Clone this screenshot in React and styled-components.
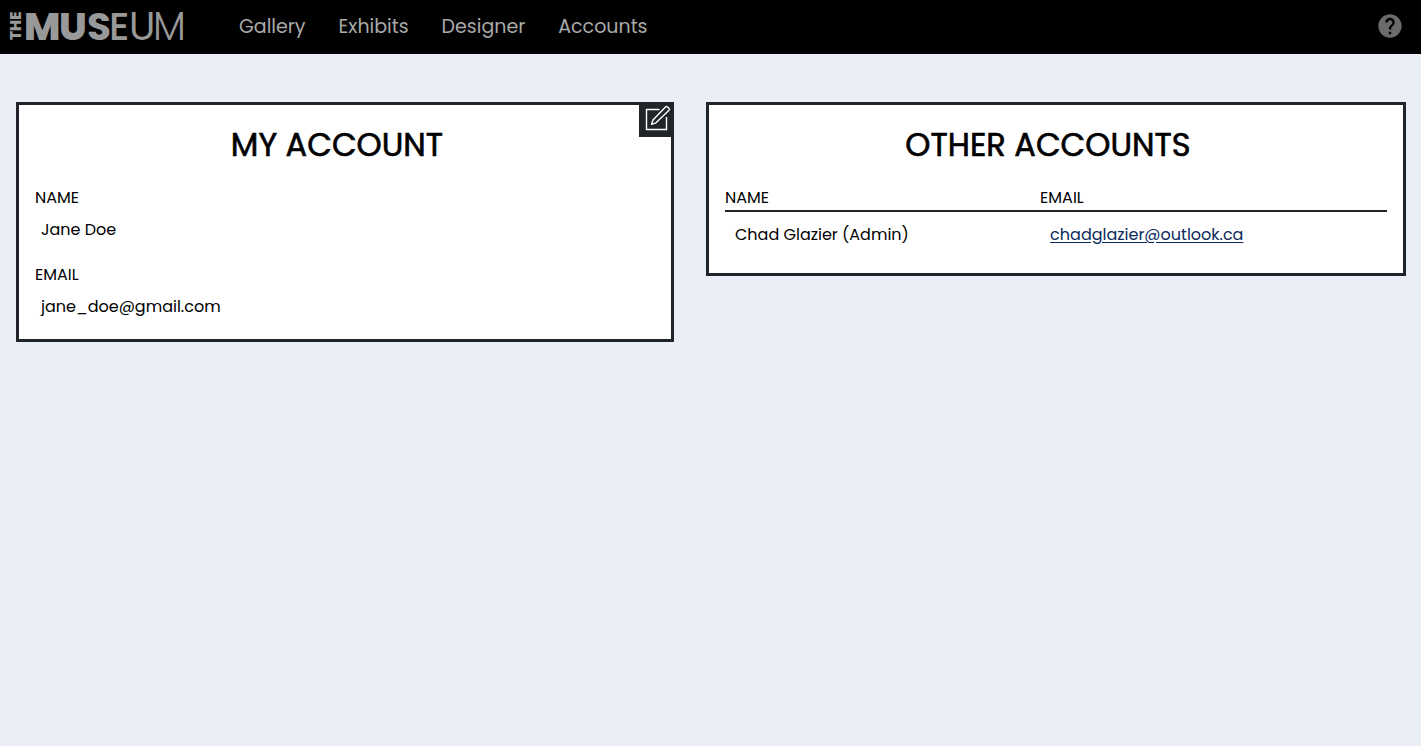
import React from "react";
import styled, { createGlobalStyle } from "styled-components";

const ink = "#212529";

const GlobalStyle = createGlobalStyle`
  *, *::before, *::after { box-sizing: border-box; }
  body {
    margin: 0;
    background: #eaeff7;
    color: #000;
    font-family: Poppins, Inter, sans-serif;
    font-size: 16px;
    font-weight: 400;
    line-height: 24px;
  }
`;

const TopBar = styled.header`
  display: flex;
  align-items: center;
  height: 54px;
  padding: 0 17px 2px 9px;
  background: #000;
`;

const Logo = styled.a`
  display: flex;
  width: 230px;
  color: #999;
  text-decoration: none;

  svg { overflow: visible; }
`;

const Nav = styled.nav`
  display: flex;
  gap: 33px;
  flex: 1;
  padding-top: 2px;
`;

const NavLink = styled.a`
  color: #aaa;
  font-size: 19px;
  line-height: 30px;
  font-weight: 400;
  text-decoration: none;
`;

const HelpButton = styled.button`
  display: flex;
  padding: 0;
  border: 0;
  background: none;
  color: #6b6b6b;
  cursor: pointer;
`;

const Main = styled.main`
  display: grid;
  grid-template-columns: 47fr 50fr;
  align-items: start;
  gap: 32px;
  padding: 48px 15px 48px 16px;
`;

const Card = styled.section`
  position: relative;
  padding: 16px;
  border: 3px solid ${ink};
  background: #fff;
`;

const CardTitle = styled.h1`
  margin: 0 0 17px;
  padding-right: 16px;
  font-size: 32px;
  line-height: 48px;
  font-weight: 400;
  -webkit-text-stroke: 0.02em #000;
  text-align: center;
`;

const EditButton = styled.button`
  position: absolute;
  top: 0;
  right: 0;
  display: flex;
  padding: 0 0 4px 4px;
  border: 0;
  background: ${ink};
  color: #fff;
  cursor: pointer;
`;

const Fields = styled.dl`
  display: grid;
  gap: 21px;
  margin: 0;
  padding-bottom: 4px;
`;

const FieldName = styled.dt`
  margin: 0 0 8px;
`;

const FieldValue = styled.dd`
  margin: 0;
  padding: 0 6px;
`;

const AccountTable = styled.table`
  width: 100%;
  border-collapse: collapse;
  table-layout: fixed;
`;

const HeadCell = styled.th`
  width: ${(p) => p.$width};
  padding: 0;
  border-bottom: 2px solid ${ink};
  font-weight: 400;
  text-align: left;
`;

const Cell = styled.td`
  padding: 11px 10px 10px;
`;

const MailLink = styled.a`
  color: #0b2a5b;
  text-decoration: underline;
  text-underline-offset: 2px;
`;

const navItems = ["Gallery", "Exhibits", "Designer", "Accounts"];
const fields = [
  ["NAME", "Jane Doe"],
  ["EMAIL", "jane_doe@gmail.com"],
];
const accounts = [{ name: "Chad Glazier (Admin)", email: "chadglazier@outlook.ca" }];

function LogoMark() {
  return (
    <svg width="180" height="52" viewBox="0 0 180 52" fill="currentColor" role="img" aria-label="The Museum">
      <text transform="translate(12 40) rotate(-90)" fontSize="15" fontWeight="800">THE</text>
      <text y="40" fontSize="39">
        <tspan x="15" fontWeight="800">M</tspan>
        <tspan x="50" fontWeight="800">U</tspan>
        <tspan x="78" fontWeight="700">S</tspan>
        <tspan x="100" fontWeight="500">E</tspan>
        <tspan x="120" fontWeight="400">U</tspan>
        <tspan x="144" fontWeight="300">M</tspan>
      </text>
    </svg>
  );
}

function HelpIcon() {
  return (
    <svg width="28" height="28" viewBox="0 0 24 24" fill="currentColor" aria-hidden="true">
      <path d="M12 2C6.48 2 2 6.48 2 12s4.480 10 10 10 10-4.480 10-10S17.520 2 12 2zm1 17h-2v-2h2v2zm2.070-7.750l-.9.920C13.450 12.900 13 13.500 13 15h-2v-.5c0-1.100.450-2.100 1.170-2.830l1.240-1.260c.370-.360.590-.860.590-1.410 0-1.100-.9-2-2-2s-2 .9-2 2H8c0-2.210 1.790-4 4-4s4 1.790 4 4c0 .880-.360 1.680-.930 2.250z" />
    </svg>
  );
}

function EditIcon() {
  return (
    <svg width="28" height="28" viewBox="0 0 28 28" fill="none" stroke="currentColor" strokeWidth="1.400" aria-hidden="true">
      <path d="M16.500 4.500H3.500V24.500H23.500V12" />
      <path d="M8.500 19.300L10 15L22.500 2Q23.500 1 24.500 1.900L26 3.300Q27 4.300 26 5.300L13 17.800Z" strokeLinejoin="round" />
    </svg>
  );
}

export default function App() {
  return (
    <>
      <GlobalStyle />
      <TopBar>
        <Logo href="#home"><LogoMark /></Logo>
        <Nav>
          {navItems.map((item) => (
            <NavLink key={item} href={`#${item.toLowerCase()}`}>{item}</NavLink>
          ))}
        </Nav>
        <HelpButton aria-label="Help"><HelpIcon /></HelpButton>
      </TopBar>
      <Main>
        <Card>
          <CardTitle>MY ACCOUNT</CardTitle>
          <EditButton aria-label="Edit account"><EditIcon /></EditButton>
          <Fields>
            {fields.map(([name, value]) => (
              <div key={name}>
                <FieldName>{name}</FieldName>
                <FieldValue>{value}</FieldValue>
              </div>
            ))}
          </Fields>
        </Card>
        <Card>
          <CardTitle>OTHER ACCOUNTS</CardTitle>
          <AccountTable>
            <thead>
              <tr>
                <HeadCell scope="col" $width="47.6%">NAME</HeadCell>
                <HeadCell scope="col" $width="52.4%">EMAIL</HeadCell>
              </tr>
            </thead>
            <tbody>
              {accounts.map(({ name, email }) => (
                <tr key={email}>
                  <Cell>{name}</Cell>
                  <Cell><MailLink href={`mailto:${email}`}>{email}</MailLink></Cell>
                </tr>
              ))}
            </tbody>
          </AccountTable>
        </Card>
      </Main>
    </>
  );
}
